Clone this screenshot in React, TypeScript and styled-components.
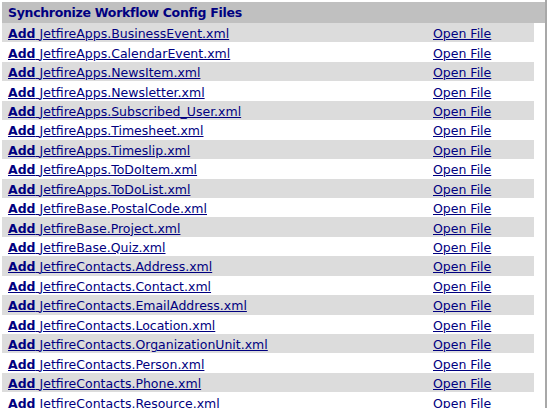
import * as React from 'react';
import styled, { createGlobalStyle } from 'styled-components';

const FILES = [
  'JetfireApps.BusinessEvent.xml',
  'JetfireApps.CalendarEvent.xml',
  'JetfireApps.NewsItem.xml',
  'JetfireApps.Newsletter.xml',
  'JetfireApps.Subscribed_User.xml',
  'JetfireApps.Timesheet.xml',
  'JetfireApps.Timeslip.xml',
  'JetfireApps.ToDoItem.xml',
  'JetfireApps.ToDoList.xml',
  'JetfireBase.PostalCode.xml',
  'JetfireBase.Project.xml',
  'JetfireBase.Quiz.xml',
  'JetfireContacts.Address.xml',
  'JetfireContacts.Contact.xml',
  'JetfireContacts.EmailAddress.xml',
  'JetfireContacts.Location.xml',
  'JetfireContacts.OrganizationUnit.xml',
  'JetfireContacts.Person.xml',
  'JetfireContacts.Phone.xml',
  'JetfireContacts.Resource.xml',
];

const GlobalStyle = createGlobalStyle`
  html, body {
    margin: 0;
    padding: 0;
    background: #fff;
    overflow: hidden;
  }
  body {
    font-family: "DejaVu Sans", Verdana, sans-serif;
    font-size: 12.5px;
    color: #000080;
  }
`;

export default function App() {
  return (
    <>
      <GlobalStyle />
      <FrameStyled>
        <HeaderStyled>Synchronize Workflow Config Files</HeaderStyled>
        <ListStyled>
          {FILES.map((name, i) => (
            <RowStyled key={name} $shaded={i % 2 === 0}>
              <LinkStyled href='#'><b>Add</b> {name}</LinkStyled>
              <LinkStyled href='#'>Open File</LinkStyled>
            </RowStyled>
          ))}
        </ListStyled>
      </FrameStyled>
    </>
  );
}

const FrameStyled = styled.div`
  width: 547px;
  height: 408px;
  box-sizing: border-box;
  padding: 2px 0 0 2px;
  border-right: 2px solid #a8a8a8;
`;

const HeaderStyled = styled.div`
  background: #c0c0c0;
  height: 21px;
  line-height: 22px;
  padding-left: 6px;
  font-weight: bold;
  letter-spacing: -0.3px;
`;

const ListStyled = styled.div`
  width: 532px;
`;

const RowStyled = styled.div<{ $shaded: boolean }>`
  display: grid;
  grid-template-columns: 425px 1fr;
  align-items: center;
  box-sizing: border-box;
  height: 19.45px;
  padding: 2px 0 0 6px;
  background: ${p => (p.$shaded ? '#dcdcdc' : '#fff')};
`;

const LinkStyled = styled.a`
  color: #000080;
  text-decoration: underline;
  white-space: nowrap;
  b {
    font-weight: bold;
  }
`;
